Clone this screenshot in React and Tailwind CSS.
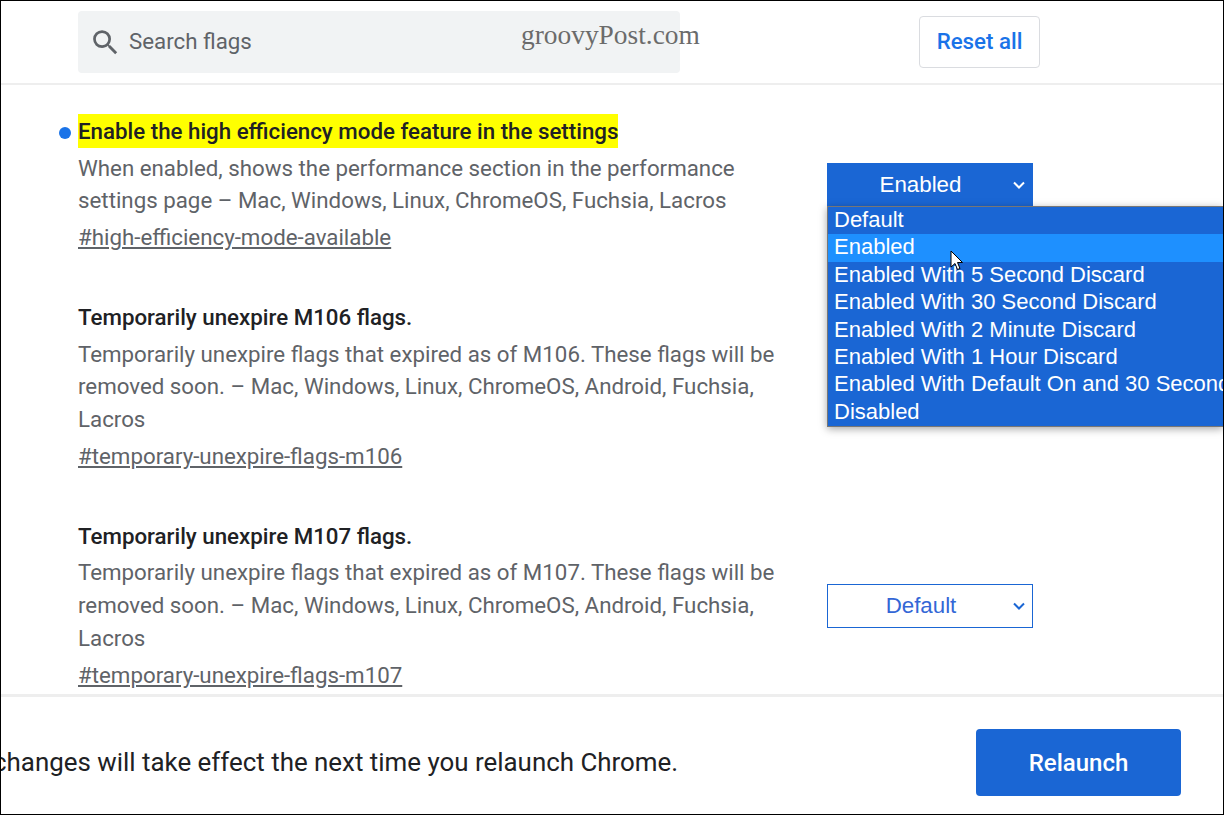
import React from "react";

const roboto = "font-['Roboto',sans-serif]";
const arial = "font-['Liberation_Sans',Arial,sans-serif]";

function Chevron({ className }) {
  return (
    <svg width="14" height="14" viewBox="0 0 14 14" fill="none" className={className}>
      <path d="M2 4.5 L7 9.5 L12 4.5" stroke="currentColor" strokeWidth="2" />
    </svg>
  );
}

function Flag({ title, lines, tag, dot = false, children, className = "" }) {
  return (
    <div className={`flex ${className}`}>
      <div className="w-[749px] shrink-0 relative">
        {dot && <span className="absolute left-[-19px] top-[13px] w-[12px] h-[12px] rounded-full bg-[#1a73e8]" />}
        <h2 className="text-[22.3px] font-medium leading-[34px] text-[#202124] whitespace-nowrap">{title}</h2>
        <p className="text-[22.3px] leading-[32.75px] text-[#5f6368] mt-[3.5px]">
          {lines.map((l, i) => (
            <span key={i} className="block whitespace-nowrap">{l}</span>
          ))}
        </p>
        <a className="block text-[22.3px] leading-[32px] text-[#5f6368] underline mt-[4px] whitespace-nowrap">{tag}</a>
      </div>
      {children}
    </div>
  );
}

function Option({ label, active }) {
  return (
    <div className={`h-[27.4px] leading-[26px] pl-[6px] text-[22px] whitespace-nowrap text-white ${active ? "bg-[#1e90ff]" : ""}`}>
      {label}
    </div>
  );
}

export default function App() {
  return (
    <div className={`relative w-[1224px] h-[815px] overflow-hidden bg-white border border-black flex flex-col ${roboto}`}>
      <header className="h-[84px] shrink-0 flex border-b-2 border-[#eeeeee] pl-[77px] pt-[10px] relative">
        <div className="w-[602px] h-[62px] rounded-[4px] bg-[#f1f3f4] flex items-center pl-[11px]">
          <svg width="33" height="33" viewBox="0 0 24 24" className="text-[#5f6368]" fill="currentColor">
            <path d="M15.5 14h-.79l-.28-.27A6.47 6.47 0 0 0 16 9.5 6.5 6.5 0 1 0 9.5 16c1.61 0 3.09-.59 4.23-1.57l.27.28v.79l5 4.99L20.49 19l-4.99-5zm-6 0C7.01 14 5 11.99 5 9.5S7.01 5 9.5 5 14 7.01 14 9.5 11.99 14 9.5 14z" />
          </svg>
          <span className="ml-[7px] text-[22.3px] text-[#5f6368]">Search flags</span>
        </div>
        <span className="absolute left-[520px] top-[18px] text-[27.4px] leading-[32px] text-[#6b6b6b] font-['Liberation_Serif',serif]">groovyPost.com</span>
        <button className="ml-[239px] mt-[5px] w-[121px] h-[52px] pb-[1px] rounded-[4px] border border-[#dadce0] bg-white text-[#1a73e8] text-[22.3px] font-medium">
          Reset all
        </button>
      </header>

      <main className="flex-1 overflow-hidden pl-[77px] pt-[29px]">
        <Flag
          dot
          title={<span className="bg-[#ffff00] inline-block h-[34px]">Enable the high efficiency mode feature in the settings</span>}
          lines={["When enabled, shows the performance section in the performance", "settings page – Mac, Windows, Linux, ChromeOS, Fuchsia, Lacros"]}
          tag="#high-efficiency-mode-available"
        >
          <div className={`mt-[49px] w-[206px] h-[44px] bg-[#1a66d4] text-white flex items-center ${arial}`}>
            <span className="flex-1 text-center text-[22.3px] pl-[2px]">Enabled</span>
            <Chevron className="mr-[7px]" />
          </div>
        </Flag>

        <Flag
          className="mt-[47px]"
          title="Temporarily unexpire M106 flags."
          lines={["Temporarily unexpire flags that expired as of M106. These flags will be", "removed soon. – Mac, Windows, Linux, ChromeOS, Android, Fuchsia,", "Lacros"]}
          tag="#temporary-unexpire-flags-m106"
        />

        <Flag
          className="mt-[47px]"
          title="Temporarily unexpire M107 flags."
          lines={["Temporarily unexpire flags that expired as of M107. These flags will be", "removed soon. – Mac, Windows, Linux, ChromeOS, Android, Fuchsia,", "Lacros"]}
          tag="#temporary-unexpire-flags-m107"
        >
          <div className={`mt-[65px] w-[206px] h-[44px] border border-[#1a66d4] bg-white text-[#3367d6] flex items-center ${arial}`}>
            <span className="flex-1 text-center text-[22.3px] pl-[2px]">Default</span>
            <Chevron className="mr-[6px] text-[#1a66d4]" />
          </div>
        </Flag>
      </main>

      <footer className="h-[120px] shrink-0 border-t-[3px] border-[#eeeeee] flex items-center bg-white pt-[14px]">
        <div className="w-[974px] shrink-0 overflow-hidden whitespace-nowrap text-[25.9px] text-[#202124]">
          <span className="block ml-[-8px]">changes will take effect the next time you relaunch Chrome.</span>
        </div>
        <button className="ml-[1px] w-[205px] h-[67px] rounded-[4px] bg-[#1a66d4] text-white text-[24px] font-medium">
          Relaunch
        </button>
      </footer>

      <div className={`absolute left-[826px] top-[205px] right-0 h-[221px] bg-[#1a66d4] border border-[#767676] border-r-0 shadow-[0_2px_8px_rgba(0,0,0,0.35)] overflow-hidden ${arial}`}>
        {["Default", "Enabled", "Enabled With 5 Second Discard", "Enabled With 30 Second Discard", "Enabled With 2 Minute Discard", "Enabled With 1 Hour Discard", "Enabled With Default On and 30 Second Discard", "Disabled"].map((o, i) => (
          <Option key={o} label={o} active={i === 1} />
        ))}
      </div>

      <svg width="14" height="22" viewBox="0 0 14 22" className="absolute left-[949px] top-[249px]">
        <path d="M1 1 L1 17 L5 13.5 L7.5 19.5 L10 18.5 L7.5 12.5 L12.5 12.5 Z" fill="white" stroke="black" strokeWidth="1" />
      </svg>
    </div>
  );
}
